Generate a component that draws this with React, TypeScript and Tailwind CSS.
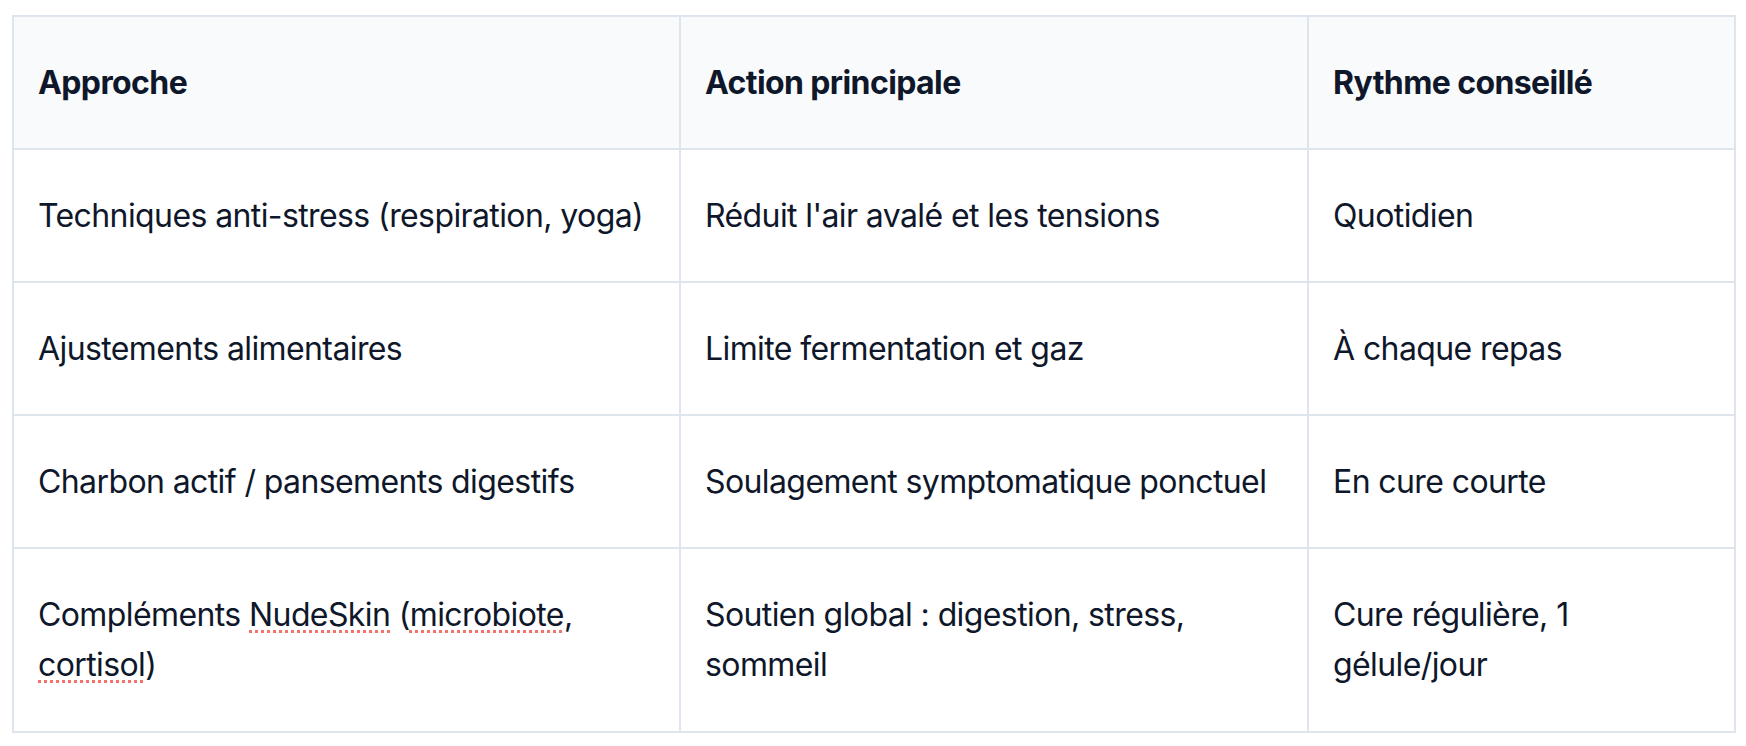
import React from 'react';

const rows: { approach: React.ReactNode; action: string; rhythm: string }[] = [
  {
    approach: 'Techniques anti-stress (respiration, yoga)',
    action: "Réduit l'air avalé et les tensions",
    rhythm: 'Quotidien',
  },
  {
    approach: 'Ajustements alimentaires',
    action: 'Limite fermentation et gaz',
    rhythm: 'À chaque repas',
  },
  {
    approach: 'Charbon actif / pansements digestifs',
    action: 'Soulagement symptomatique ponctuel',
    rhythm: 'En cure courte',
  },
  {
    approach: (
      <>
        Compléments <Typo>NudeSkin</Typo> (<Typo>microbiote</Typo>, <Typo>cortisol</Typo>)
      </>
    ),
    action: 'Soutien global : digestion, stress, sommeil',
    rhythm: 'Cure régulière, 1 gélule/jour',
  },
];

// red dotted marks, as the spellchecker drew them
function Typo({ children }: { children: React.ReactNode }) {
  return (
    <span className="underline decoration-dotted decoration-[#f4726c] decoration-[3px] underline-offset-[4px]">
      {children}
    </span>
  );
}

const cell = 'border-2 border-[#dfe5ec] px-6 py-[41px] align-middle';

export default function App() {
  return (
    <div className="min-h-screen bg-white pt-[15px] pl-[12px]">
      <table
        className="table-fixed border-collapse w-[1722px] text-left text-[32px] leading-[49px] tracking-[-0.6px] text-[#0f172a]"
        style={{ fontFamily: 'Inter, "Noto Sans", sans-serif' }}
      >
        <colgroup>
          <col className="w-[667px]" />
          <col className="w-[628px]" />
          <col className="w-[427px]" />
        </colgroup>
        <thead>
          <tr className="bg-[#f8fafc]">
            <th className={`${cell} font-bold`}>Approche</th>
            <th className={`${cell} font-bold`}>Action principale</th>
            <th className={`${cell} font-bold`}>Rythme conseillé</th>
          </tr>
        </thead>
        <tbody>
          {rows.map((r, i) => (
            <tr key={i} className={i === rows.length - 1 ? 'leading-[50px]' : ''}>
              <td className={cell}>{r.approach}</td>
              <td className={cell}>{r.action}</td>
              <td className={cell}>{r.rhythm}</td>
            </tr>
          ))}
        </tbody>
      </table>
    </div>
  );
}
